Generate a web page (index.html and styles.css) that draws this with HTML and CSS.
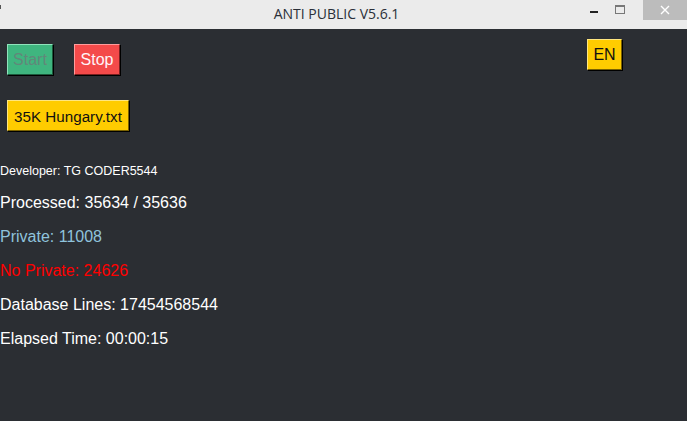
FILE: index.html
```html
<!DOCTYPE html>
<html>
<head>
<meta charset="utf-8">
<link rel="stylesheet" href="styles.css">
</head>
<body>
<div class="window">
  <div class="titlebar">
    <span class="app-icon"></span>
    <span class="title">ANTI PUBLIC V5.6.1</span>
    <div class="controls">
      <span class="ctl ctl-min"><span class="dash"></span></span>
      <span class="ctl ctl-max"><span class="box"></span></span>
      <span class="ctl ctl-close">
        <svg width="10" height="10" viewBox="0 0 10 10"><path d="M1 1 L9 9 M9 1 L1 9" stroke="#fff" stroke-width="1.4"/></svg>
      </span>
    </div>
  </div>
  <div class="content">
    <div class="top-row">
      <div class="btn-group">
        <button class="btn btn-start">Start</button>
        <button class="btn btn-stop">Stop</button>
      </div>
      <button class="btn btn-lang">EN</button>
    </div>
    <button class="btn btn-file">35K Hungary.txt</button>
    <div class="developer">Developer: TG CODER5544</div>
    <div class="stats">
      <div class="stat">Processed: 35634 / 35636</div>
      <div class="stat stat-private">Private: 11008</div>
      <div class="stat stat-noprivate">No Private: 24626</div>
      <div class="stat">Database Lines: 17454568544</div>
      <div class="stat">Elapsed Time: 00:00:15</div>
    </div>
  </div>
</div>
</body>
</html>
```
FILE: styles.css
```css
html, body {
  margin: 0;
  padding: 0;
  width: 687px;
  height: 421px;
  overflow: hidden;
  background: #2b2e33;
  font-family: "Liberation Sans", Arial, sans-serif;
}
.window {
  display: flex;
  flex-direction: column;
  height: 421px;
}
.titlebar {
  height: 29px;
  background: #ebebeb;
  position: relative;
  display: flex;
  align-items: flex-start;
  justify-content: center;
  flex-shrink: 0;
}
.app-icon {
  position: absolute;
  left: 0;
  top: 5px;
  width: 1px;
  height: 4px;
  background: #555;
}
.title {
  font-family: "Open Sans", "Noto Sans", sans-serif;
  font-size: 14px;
  color: #2a2f38;
  line-height: 28px;
  margin-right: 14px;
}
.controls {
  position: absolute;
  right: 0;
  top: 0;
  display: flex;
}
.ctl {
  display: flex;
  align-items: center;
  justify-content: center;
  height: 20px;
}
.ctl-min {
  width: 26px;
}
.dash {
  display: block;
  width: 8px;
  height: 2px;
  background: #222;
  margin-top: 4px;
}
.ctl-max {
  width: 26px;
  margin-right: 10px;
}
.box {
  display: block;
  width: 8px;
  height: 6px;
  border: 1px solid #777;
  border-top-width: 2px;
  margin-top: -2px;
}
.ctl-close {
  width: 44px;
  background: #bcbcbc;
}
.content {
  flex: 1;
  display: flex;
  flex-direction: column;
  align-items: flex-start;
  color: #fff;
}
.top-row {
  align-self: stretch;
  display: flex;
  justify-content: space-between;
  align-items: flex-start;
  padding: 10px 65px 0 7px;
}
.btn-group {
  display: flex;
  gap: 21px;
  padding-top: 5px;
}
.btn {
  font-family: "Liberation Sans", Arial, sans-serif;
  font-size: 16px;
  height: 31px;
  padding: 1px 0 0 0;
  margin: 0;
  border: 1px solid;
  box-shadow: 1px 1px 0 #000;
  cursor: default;
}
.btn-start {
  width: 46px;
  background: #3fb57f;
  border-color: #8fe3bb #1c5a3d #1c5a3d #8fe3bb;
  color: #62877a;
}
.btn-stop {
  width: 46px;
  background: #f44a4a;
  border-color: #ff9b9b #7a1f1f #7a1f1f #ff9b9b;
  color: #fff4f8;
}
.btn-lang {
  width: 35px;
  background: #ffcc00;
  border-color: #ffe680 #7a6200 #7a6200 #ffe680;
  color: #111;
}
.btn-file {
  margin: 25px 0 0 7px;
  width: 122px;
  background: #ffcc00;
  border-color: #ffe680 #7a6200 #7a6200 #ffe680;
  color: #111;
  font-size: 15.2px;
}
.developer {
  margin-top: 31px;
  font-size: 12.5px;
  line-height: 18px;
  color: #fff;
}
.stats {
  margin-top: 6px;
  display: flex;
  flex-direction: column;
}
.stat {
  font-size: 16px;
  line-height: 34px;
  color: #fff;
}
.stat-private {
  color: #8fc3dc;
}
.stat-noprivate {
  color: #ff0000;
}
```
